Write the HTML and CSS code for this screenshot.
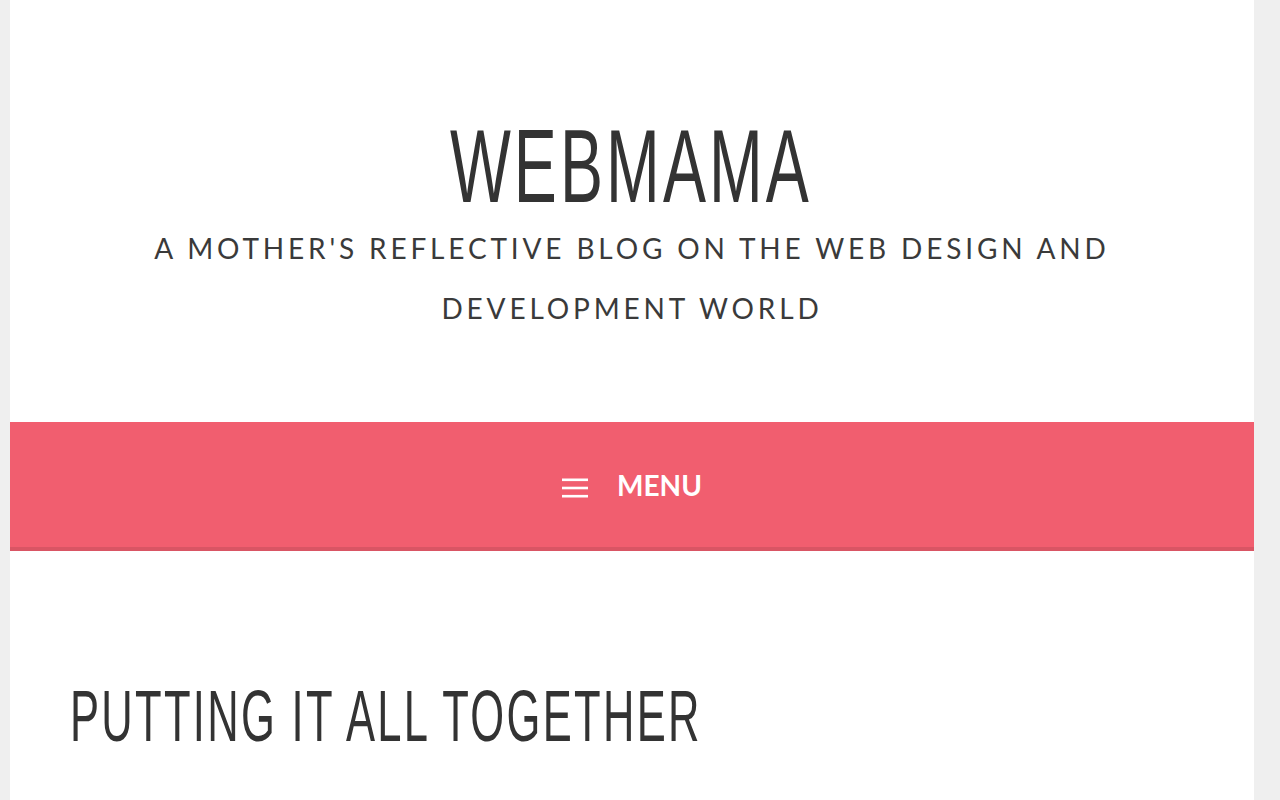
FILE: index.html
```html
<!DOCTYPE html>
<html lang="en">
<head>
<meta charset="utf-8">
<title>WEBMAMA</title>
<link rel="stylesheet" href="styles.css">
</head>
<body>
<div class="page">
  <header class="site-header">
    <h1 class="site-title"><span class="site-title-text">WEBMAMA</span></h1>
    <p class="site-tagline">A MOTHER'S REFLECTIVE BLOG ON THE WEB DESIGN AND DEVELOPMENT WORLD</p>
  </header>
  <nav class="menu-bar">
    <button class="menu-toggle" type="button">
      <svg class="menu-icon" width="26" height="20" viewBox="0 0 26 20" aria-hidden="true">
        <rect x="0" y="0.5" width="26" height="2.6" fill="#fff"/>
        <rect x="0" y="8.7" width="26" height="2.6" fill="#fff"/>
        <rect x="0" y="16.9" width="26" height="2.6" fill="#fff"/>
      </svg>
      <span class="menu-label">MENU</span>
    </button>
  </nav>
  <main class="content">
    <h2 class="entry-title"><span class="entry-title-text">PUTTING IT ALL TOGETHER</span></h2>
  </main>
</div>
</body>
</html>
```

FILE: styles.css
```css
html, body {
  margin: 0;
  padding: 0;
}
body {
  background: #efefef;
  color: #333333;
  font-family: "Lato", "Liberation Sans", sans-serif;
  height: 800px;
  overflow: hidden;
}
.page {
  margin-left: 10px;
  width: 1244px;
  min-height: 800px;
  background: #ffffff;
}
.site-header {
  padding-top: 114px;
  text-align: center;
}
.site-title {
  margin: 0;
  height: 104px;
  font-family: "Liberation Sans", sans-serif;
  font-weight: 400;
  font-size: 104px;
  line-height: 104px;
  color: #333333;
}
.site-title-text {
  display: inline-block;
  letter-spacing: 5px;
  padding-right: 5px;
  transform: scaleX(0.62);
  transform-origin: center;
}
.site-tagline {
  margin: 1px auto 0;
  max-width: 1000px;
  font-family: "Lato", "Liberation Sans", sans-serif;
  font-weight: 400;
  font-size: 28px;
  line-height: 59.5px;
  letter-spacing: 3.85px;
  color: #3a3a3a;
}
.menu-bar {
  margin-top: 84px;
  height: 125px;
  background: #f15e6f;
  border-bottom: 4px solid #d95564;
  display: flex;
  align-items: center;
  justify-content: center;
}
.menu-toggle {
  display: flex;
  align-items: center;
  gap: 29px;
  background: none;
  border: 0;
  padding: 0;
  color: #ffffff;
  cursor: pointer;
}
.menu-icon {
  display: block;
  margin-top: 6px;
}
.menu-label {
  font-family: "Lato", "Liberation Sans", sans-serif;
  font-weight: 700;
  font-size: 28px;
  line-height: 1;
}
.content {
  padding: 129px 60px 0;
}
.entry-title {
  margin: 0;
  font-family: "Liberation Sans", sans-serif;
  font-weight: 400;
  font-size: 72.6px;
  line-height: 72.6px;
  color: #333333;
}
.entry-title-text {
  display: inline-block;
  letter-spacing: 3.8px;
  transform: scaleX(0.6);
  transform-origin: left center;
  white-space: nowrap;
}
```
